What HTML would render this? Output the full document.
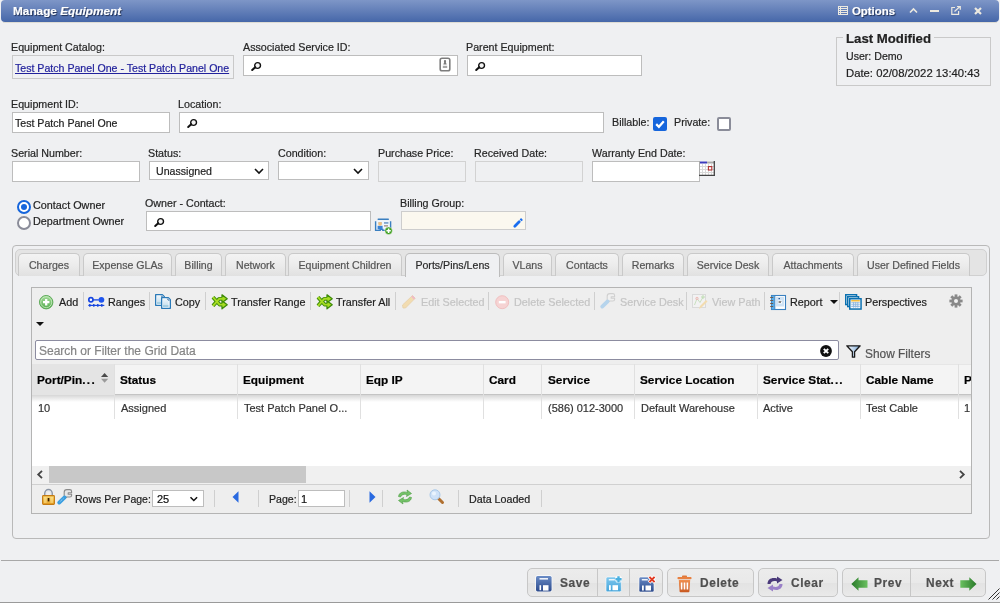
<!DOCTYPE html>
<html><head><meta charset="utf-8">
<style>
*{box-sizing:border-box}
html,body{margin:0;padding:0}
body{-webkit-text-stroke:0.2px currentColor;width:1000px;height:603px;overflow:hidden;background:#eff0f2;position:relative;font-family:"Liberation Sans",sans-serif;color:#2a2a2a}
.a{position:absolute}
.t{position:absolute;white-space:nowrap;font-size:11px;line-height:13px;will-change:transform}
.lbl{color:#262626;font-size:10.7px}
.box{position:absolute;background:#fff;border:1px solid #bdbdbd}
.dis{background:#eff0f2;border-color:#d2d2d2}
svg{position:absolute;overflow:visible}
.tab,.tb,.hd,.cell,.bt{will-change:transform}
#title{left:1px;top:0;width:998px;height:22px;border-radius:4px;background:linear-gradient(#7e96c7,#4667a9)}
.tt{color:#fff;font-weight:bold;font-size:11.8px;text-shadow:1px 1px 1px #1e2d50}
.tab{position:absolute;top:253px;height:23px;border:1px solid #c9c9c9;border-bottom:none;border-radius:5px 5px 0 0;background:linear-gradient(#f3f3f3 0%,#ececec 50%,#e1e1e1 100%);color:#555;font-size:10.6px;line-height:23px;text-align:center;white-space:nowrap}
.tab.on{background:#eff0f2;color:#2a2a2a;height:24px;border-color:#bcbcbc}
.sep{position:absolute;width:1px;background:#cfcfcf}
.tb{position:absolute;top:296px;font-size:10.8px;line-height:13px;white-space:nowrap;color:#1f1f1f}
.tbd{color:#c4c4c4}
.hd{position:absolute;top:374px;font-weight:bold;font-size:11.8px;line-height:13px;white-space:nowrap;color:#000}
.cell{position:absolute;top:402px;font-size:11px;line-height:13px;white-space:nowrap;color:#333}
.btn{position:absolute;top:568px;height:29px;border:1px solid #c7c7c7;border-radius:5px;background:linear-gradient(#ececec 0%,#e9e9e9 50%,#e3e3e3 52%,#e6e6e6 80%,#eaeaea 100%)}
.bt{position:absolute;top:576px;font-weight:bold;font-size:11.9px;line-height:14px;color:#4f4f4f;white-space:nowrap;letter-spacing:0.6px}
</style></head><body>

<!-- title bar -->
<div id="title" class="a"></div>
<div class="a" style="left:3px;top:22px;width:994px;height:1px;background:#dedcd4"></div>
<div class="t tt" style="left:13px;top:5px">Manage <i>Equipment</i></div>
<svg style="left:838px;top:6px" width="10" height="9" viewBox="0 0 10 9"><rect x="0.5" y="0.5" width="9" height="8" fill="none" stroke="#ece9e0" stroke-width="1"/><path d="M0.5 2.5H9.5M0.5 4.5H9.5M0.5 6.5H9.5M2.5 0.5V8.5" stroke="#ece9e0" stroke-width="1"/></svg>
<div class="t tt" style="left:852px;top:5px;font-size:11.4px">Options</div>
<svg style="left:909px;top:8px" width="9" height="5" viewBox="0 0 9 5"><path d="M1 4.5L4.5 1L8 4.5" fill="none" stroke="#ece9e0" stroke-width="1.6"/></svg>
<svg style="left:930px;top:10px" width="10" height="3"><rect x="0" y="0" width="9" height="2" fill="#ece9e0"/></svg>
<svg style="left:951px;top:6px" width="10" height="9" viewBox="0 0 10 9"><path d="M4 1.5H0.8V8.3H7.6V5" fill="none" stroke="#ece9e0" stroke-width="1.2"/><path d="M3.5 5.5L9 0.5M6 0.5H9.3V3.8" fill="none" stroke="#ece9e0" stroke-width="1.2"/></svg>
<svg style="left:974px;top:7px" width="8" height="8" viewBox="0 0 8 8"><path d="M1 1L7 7M7 1L1 7" stroke="#ece9e0" stroke-width="2.2"/></svg>

<!-- row 1 -->
<div class="t lbl" style="left:11px;top:41px">Equipment Catalog:</div>
<div class="box" style="left:12px;top:55px;width:222px;height:24px;background:#f0f1f3;border-color:#c9c9c9"></div>
<div class="t" style="left:15px;top:62px;font-size:10.6px;color:#22229c;text-decoration:underline">Test Patch Panel One - Test Patch Panel One</div>

<div class="t lbl" style="left:243px;top:41px">Associated Service ID:</div>
<div class="box" style="left:243px;top:55px;width:215px;height:21px"></div>
<div class="t lbl" style="left:466px;top:41px">Parent Equipment:</div>
<div class="box" style="left:467px;top:55px;width:175px;height:21px"></div>

<div class="a" style="left:836px;top:37px;width:155px;height:49px;border:1px solid #c9c9c9"></div>
<div class="t" style="left:843px;top:32px;padding:0 3px;background:#eff0f2;font-weight:bold;font-size:13.2px;line-height:14px;color:#222">Last Modified</div>
<div class="t" style="left:846px;top:50px;font-size:10.6px;color:#222">User: Demo</div>
<div class="t" style="left:846px;top:67px;font-size:11.3px;color:#222">Date: 02/08/2022 13:40:43</div>

<!-- row 2 -->
<div class="t lbl" style="left:11px;top:98px">Equipment ID:</div>
<div class="box" style="left:12px;top:112px;width:158px;height:21px"></div>
<div class="t" style="left:15px;top:117px;font-size:10.6px;color:#222">Test Patch Panel One</div>
<div class="t lbl" style="left:178px;top:98px">Location:</div>
<div class="box" style="left:179px;top:112px;width:425px;height:21px"></div>
<div class="t lbl" style="left:612px;top:116px">Billable:</div>
<div class="a" style="left:653px;top:117px;width:14px;height:14px;border-radius:2px;background:#1565dc"></div>
<svg style="left:653px;top:117px" width="14" height="14" viewBox="0 0 14 14"><path d="M3.2 7.1L5.9 9.8L10.8 4.2" fill="none" stroke="#fff" stroke-width="2.2"/></svg>
<div class="t lbl" style="left:674px;top:116px">Private:</div>
<div class="a" style="left:717px;top:117px;width:14px;height:14px;border-radius:2px;background:#fff;border:2px solid #8a8c99"></div>

<!-- row 3 -->
<div class="t lbl" style="left:11px;top:147px">Serial Number:</div>
<div class="box" style="left:12px;top:161px;width:128px;height:21px"></div>
<div class="t lbl" style="left:148px;top:147px">Status:</div>
<div class="box" style="left:149px;top:161px;width:120px;height:19px"></div>
<div class="t" style="left:156px;top:165px;font-size:10.6px;color:#222">Unassigned</div>
<div class="t lbl" style="left:278px;top:147px">Condition:</div>
<div class="box" style="left:278px;top:161px;width:91px;height:19px"></div>
<div class="t lbl" style="left:378px;top:147px">Purchase Price:</div>
<div class="box dis" style="left:378px;top:161px;width:88px;height:21px"></div>
<div class="t lbl" style="left:474px;top:147px">Received Date:</div>
<div class="box dis" style="left:475px;top:161px;width:108px;height:21px"></div>
<div class="t lbl" style="left:592px;top:147px">Warranty End Date:</div>
<div class="box" style="left:592px;top:161px;width:108px;height:21px"></div>

<!-- row 4 -->
<div class="a" style="left:17px;top:200px;width:14px;height:14px;border-radius:50%;border:2px solid #1565dc;background:#fff"></div>
<div class="a" style="left:21px;top:204px;width:6px;height:6px;border-radius:50%;background:#1565dc"></div>
<div class="a" style="left:17px;top:216px;width:14px;height:14px;border-radius:50%;border:2px solid #8a8c99;background:#fff"></div>
<div class="t" style="left:33px;top:199px;font-size:10.8px;color:#222">Contact Owner</div>
<div class="t" style="left:33px;top:215px;font-size:10.8px;color:#222">Department Owner</div>
<div class="t lbl" style="left:145px;top:197px">Owner - Contact:</div>
<div class="box" style="left:146px;top:211px;width:225px;height:20px"></div>
<div class="t lbl" style="left:400px;top:197px">Billing Group:</div>
<div class="box" style="left:401px;top:211px;width:125px;height:19px;background:#fbf8ef;border-color:#cdcdcd"></div>

<!-- tab panel -->
<div class="a" style="left:12px;top:245px;width:978px;height:294px;border:1px solid #b9b9b9;border-radius:4px;background:#eff0f2"></div>
<div class="a" style="left:15px;top:249px;width:972px;height:27px;border:1px solid #d0d0d0;border-radius:5px;background:#e4e4e4"></div>
<div class="tab" style="left:18px;width:62px">Charges</div>
<div class="tab" style="left:83px;width:89px">Expense GLAs</div>
<div class="tab" style="left:175px;width:47px">Billing</div>
<div class="tab" style="left:225px;width:61px">Network</div>
<div class="tab" style="left:288px;width:114px">Equipment Children</div>
<div class="tab on" style="left:405px;width:95px">Ports/Pins/Lens</div>
<div class="tab" style="left:503px;width:49px">VLans</div>
<div class="tab" style="left:555px;width:64px">Contacts</div>
<div class="tab" style="left:622px;width:62px">Remarks</div>
<div class="tab" style="left:687px;width:82px">Service Desk</div>
<div class="tab" style="left:772px;width:82px">Attachments</div>
<div class="tab" style="left:857px;width:113px">User Defined Fields</div>

<!-- grid container -->
<div class="a" style="left:31px;top:287px;width:941px;height:227px;border:1px solid #b4b4b4;background:#eeeeee"></div>

<!-- toolbar -->
<div class="tb" style="left:59px">Add</div>
<div class="sep" style="left:83px;top:292px;height:18px"></div>
<div class="tb" style="left:108px">Ranges</div>
<div class="sep" style="left:149px;top:292px;height:18px"></div>
<div class="tb" style="left:175px">Copy</div>
<div class="sep" style="left:205px;top:292px;height:18px"></div>
<div class="tb" style="left:231px">Transfer Range</div>
<div class="sep" style="left:310px;top:292px;height:18px"></div>
<div class="tb" style="left:336px">Transfer All</div>
<div class="sep" style="left:395px;top:292px;height:18px"></div>
<div class="tb tbd" style="left:421px">Edit Selected</div>
<div class="sep" style="left:488px;top:292px;height:18px"></div>
<div class="tb tbd" style="left:514px">Delete Selected</div>
<div class="sep" style="left:594px;top:292px;height:18px"></div>
<div class="tb tbd" style="left:620px">Service Desk</div>
<div class="sep" style="left:686px;top:292px;height:18px"></div>
<div class="tb tbd" style="left:712px">View Path</div>
<div class="sep" style="left:764px;top:292px;height:18px"></div>
<div class="tb" style="left:790px">Report</div>
<div class="sep" style="left:839px;top:292px;height:18px"></div>
<div class="tb" style="left:865px">Perspectives</div>
<svg style="left:36px;top:322px" width="8" height="4"><path d="M0 0H8L4 4Z" fill="#111"/></svg>
<svg style="left:830px;top:300px" width="8" height="4"><path d="M0 0H8L4 4Z" fill="#111"/></svg>

<!-- search -->
<div class="a" style="left:35px;top:340px;width:804px;height:20px;border:1px solid #8c8ca0;border-radius:2px;background:#fff"></div>
<div class="t" style="left:39px;top:344px;font-size:12px;line-height:14px;color:#858585">Search or Filter the Grid Data</div>
<div class="t" style="left:865px;top:347px;font-size:11.9px;line-height:14px;color:#555">Show Filters</div>

<!-- grid -->
<div class="a" style="left:32px;top:364px;width:939px;height:102px;background:#fff;overflow:hidden">
  <div class="a" style="left:0;top:0;width:939px;height:31px;background:#f4f4f4;border-top:1px solid #e6e6e6;border-bottom:1px solid #c4c4c4"></div>
  <div class="a" style="left:0;top:0;width:82px;height:31px;background:#e4e4e4"></div>
</div>
<div class="a" style="left:32px;top:395px;width:939px;height:7px;background:linear-gradient(rgba(0,0,0,.16),rgba(0,0,0,0))"></div>

<div class="hd" style="left:37px">Port/Pin<span style="letter-spacing:1.3px">...</span></div>
<div class="hd" style="left:120px">Status</div>
<div class="hd" style="left:243px">Equipment</div>
<div class="hd" style="left:366px">Eqp IP</div>
<div class="hd" style="left:489px">Card</div>
<div class="hd" style="left:548px">Service</div>
<div class="hd" style="left:640px">Service Location</div>
<div class="hd" style="left:763px">Service Stat<span style="letter-spacing:1.1px">...</span></div>
<div class="hd" style="left:866px">Cable Name</div>
<div class="hd" style="left:964px;width:7px;overflow:hidden">P</div>

<div class="cell" style="left:38px">10</div>
<div class="cell" style="left:121px">Assigned</div>
<div class="cell" style="left:244px">Test Patch Panel O...</div>
<div class="cell" style="left:548px">(586) 012-3000</div>
<div class="cell" style="left:641px">Default Warehouse</div>
<div class="cell" style="left:763px">Active</div>
<div class="cell" style="left:866px">Test Cable</div>
<div class="cell" style="left:964px;width:7px;overflow:hidden">1</div>

<!-- column separators -->
<div class="a" style="left:114px;top:364px;width:1px;height:55px;background:#e0e0e0"></div>
<div class="a" style="left:237px;top:364px;width:1px;height:55px;background:#e0e0e0"></div>
<div class="a" style="left:360px;top:364px;width:1px;height:55px;background:#e0e0e0"></div>
<div class="a" style="left:483px;top:364px;width:1px;height:55px;background:#e0e0e0"></div>
<div class="a" style="left:541px;top:364px;width:1px;height:55px;background:#e0e0e0"></div>
<div class="a" style="left:634px;top:364px;width:1px;height:55px;background:#e0e0e0"></div>
<div class="a" style="left:757px;top:364px;width:1px;height:55px;background:#e0e0e0"></div>
<div class="a" style="left:860px;top:364px;width:1px;height:55px;background:#e0e0e0"></div>
<div class="a" style="left:958px;top:364px;width:1px;height:55px;background:#e0e0e0"></div>

<!-- h scrollbar -->
<div class="a" style="left:32px;top:466px;width:939px;height:19px;background:#f0f0f0;border-bottom:1px solid #d0d0d0"></div>
<div class="a" style="left:49px;top:466px;width:257px;height:17px;background:#c8c8c8"></div>

<!-- pager -->
<div class="t" style="left:75px;top:493px;font-size:10.5px;color:#222">Rows Per Page:</div>
<div class="box" style="left:152px;top:490px;width:52px;height:17px"></div>
<div class="t" style="left:157px;top:493px;font-size:11px;color:#111">25</div>
<div class="sep" style="left:214px;top:490px;height:17px"></div>
<div class="sep" style="left:258px;top:490px;height:17px"></div>
<div class="t" style="left:269px;top:493px;font-size:10.6px;color:#222">Page:</div>
<div class="box" style="left:298px;top:490px;width:47px;height:17px"></div>
<div class="t" style="left:301px;top:493px;font-size:11px;color:#111">1</div>
<div class="sep" style="left:349px;top:490px;height:17px"></div>
<div class="sep" style="left:382px;top:490px;height:17px"></div>
<div class="sep" style="left:458px;top:490px;height:17px"></div>
<div class="t" style="left:469px;top:493px;font-size:10.7px;color:#222">Data Loaded</div>
<div class="sep" style="left:541px;top:490px;height:17px"></div>

<!-- footer -->
<div class="a" style="left:1px;top:560px;width:998px;height:1px;background:#a8a8a8"></div>
<div class="a" style="left:0;top:602px;width:1000px;height:1px;background:#9a9a9a"></div>

<div class="btn" style="left:527px;width:136px"></div>
<div class="a" style="left:597px;top:569px;width:1px;height:27px;background:#c7c7c7"></div>
<div class="a" style="left:629px;top:569px;width:1px;height:27px;background:#c7c7c7"></div>
<div class="bt" style="left:560px">Save</div>
<div class="btn" style="left:667px;width:87px"></div>
<div class="bt" style="left:700px">Delete</div>
<div class="btn" style="left:758px;width:80px"></div>
<div class="bt" style="left:791px">Clear</div>
<div class="btn" style="left:842px;width:144px"></div>
<div class="a" style="left:910px;top:569px;width:1px;height:27px;background:#c7c7c7"></div>
<div class="bt" style="left:874px">Prev</div>
<div class="bt" style="left:926px">Next</div>


<!-- ICONS -->
<!-- magnifiers in fields -->
<svg style="left:251px;top:62px" width="11" height="9" viewBox="0 0 11 9"><circle cx="6.6" cy="3.5" r="2.9" fill="#f4f4f4" stroke="#111" stroke-width="1.4"/><path d="M1.2 8L4.2 5.2" stroke="#111" stroke-width="2" stroke-linecap="round"/></svg>
<svg style="left:475px;top:62px" width="11" height="9" viewBox="0 0 11 9"><circle cx="6.6" cy="3.5" r="2.9" fill="#f4f4f4" stroke="#111" stroke-width="1.4"/><path d="M1.2 8L4.2 5.2" stroke="#111" stroke-width="2" stroke-linecap="round"/></svg>
<svg style="left:187px;top:119px" width="11" height="9" viewBox="0 0 11 9"><circle cx="6.6" cy="3.5" r="2.9" fill="#f4f4f4" stroke="#111" stroke-width="1.4"/><path d="M1.2 8L4.2 5.2" stroke="#111" stroke-width="2" stroke-linecap="round"/></svg>
<svg style="left:154px;top:218px" width="11" height="9" viewBox="0 0 11 9"><circle cx="6.6" cy="3.5" r="2.9" fill="#f4f4f4" stroke="#111" stroke-width="1.4"/><path d="M1.2 8L4.2 5.2" stroke="#111" stroke-width="2" stroke-linecap="round"/></svg>
<!-- id card -->
<svg style="left:439px;top:57px" width="12" height="15" viewBox="0 0 12 15"><rect x="1.2" y="1.2" width="9.6" height="12.6" rx="1.8" fill="#fff" stroke="#7d7d7d" stroke-width="1.6"/><path d="M6 3L7.7 7.6H4.3Z" fill="#7a7a7a"/><circle cx="6" cy="4.2" r="1.1" fill="#7a7a7a"/><rect x="3.8" y="8.8" width="4.4" height="2.2" fill="#a8a8a8"/></svg>
<!-- chevrons -->
<svg style="left:254px;top:168px" width="10" height="6" viewBox="0 0 10 6"><path d="M1 1L5 5L9 1" fill="none" stroke="#111" stroke-width="1.6"/></svg>
<svg style="left:353px;top:168px" width="10" height="6" viewBox="0 0 10 6"><path d="M1 1L5 5L9 1" fill="none" stroke="#111" stroke-width="1.6"/></svg>
<svg style="left:189px;top:496px" width="10" height="6" viewBox="0 0 10 6"><path d="M1.5 1.2L4.8 4.5L8.1 1.2" fill="none" stroke="#111" stroke-width="1.5"/></svg>
<!-- calendar -->
<svg style="left:699px;top:161px" width="16" height="15" viewBox="0 0 16 15"><rect x="0" y="0" width="16" height="15" fill="#fff"/><path d="M0.5 0V15" stroke="#aaa"/><rect x="1" y="0.5" width="7" height="2" fill="#3b3bbb"/><rect x="8" y="0.5" width="7" height="2" fill="#aaa"/><path d="M1 5.5H15M1 8.5H15M1 11.5H15M3.5 3V14M6.5 3V14M9.5 3V14M12.5 3V14" stroke="#d9d9d9" stroke-width="1"/><rect x="9.4" y="5.6" width="3.4" height="3.4" fill="#fff" stroke="#b03030" stroke-width="1.1"/><path d="M15.3 0V15M0 14.4H16" stroke="#444" stroke-width="1.3"/></svg>
<!-- contact card add -->
<svg style="left:374px;top:218px" width="19" height="17" viewBox="0 0 19 17"><rect x="2.5" y="2.6" width="13.5" height="9.4" fill="#eef6fd"/><rect x="3.5" y="0.6" width="11.5" height="1.4" rx="0.7" fill="#3a7fc0"/><path d="M1.6 3.2V12.4H6.2V11.4H8.8V12.4H13M16.6 3.2V10" fill="none" stroke="#3a7fc0" stroke-width="1.4"/><rect x="3.6" y="7.8" width="5" height="3.6" fill="#3a82d4"/><circle cx="6.1" cy="5.8" r="1.9" fill="#f0c080"/><path d="M4 5.4Q6.1 2.4 8.2 5.4L7.6 4.6Q6.1 3.6 4.6 4.6Z" fill="#8a4a10"/><rect x="10" y="4.4" width="4.4" height="1.1" fill="#3a70b0"/><rect x="10" y="7.4" width="4" height="1" fill="#8a6a5a"/><circle cx="14.6" cy="12.8" r="3.7" fill="#3c9e1e" stroke="#e8f0e0" stroke-width="0.5"/><path d="M12.4 12.8H16.8M14.6 10.6V15" stroke="#fff" stroke-width="1.6"/></svg>
<!-- pencil billing -->
<svg style="left:513px;top:217px" width="11" height="11" viewBox="0 0 11 11"><path d="M1.8 9.2L6.2 4.8" stroke="#1a6ef0" stroke-width="2.8" stroke-linecap="round"/><path d="M7.6 3.4L9 2" stroke="#1a6ef0" stroke-width="2.6" stroke-linecap="butt"/></svg>

<!-- toolbar icons -->
<svg style="left:39px;top:295px" width="15" height="15" viewBox="0 0 15 15"><defs><linearGradient id="ga" x1="0" y1="0" x2="0" y2="1"><stop offset="0" stop-color="#a6dc9c"/><stop offset="1" stop-color="#54ac4e"/></linearGradient></defs><circle cx="7.2" cy="7.2" r="6.7" fill="url(#ga)" stroke="#5aa855" stroke-width="1"/><circle cx="7.2" cy="7.2" r="5.5" fill="none" stroke="#d2f0cc" stroke-width="0.9" opacity="0.8"/><path d="M7.2 4V10.4M4 7.2H10.4" stroke="#fff" stroke-width="2.3"/></svg>
<svg style="left:88px;top:296px" width="17" height="12" viewBox="0 0 17 12"><circle cx="2.9" cy="3.8" r="2.1" fill="#fff" stroke="#1746e0" stroke-width="1.7"/><path d="M5 3.9H10.8" stroke="#1746e0" stroke-width="1.3"/><circle cx="13.4" cy="3.8" r="2.9" fill="#1e55ee"/><path d="M0.3 9.4H16.3" stroke="#1746e0" stroke-width="1.2"/><path d="M1.8 8V10.8M5.8 8V10.8M9.8 8V10.8M13.8 8V10.8" stroke="#1746e0" stroke-width="1.4"/></svg>
<svg style="left:155px;top:294px" width="17" height="16" viewBox="0 0 17 16"><defs><linearGradient id="gc" x1="0" y1="0" x2="0" y2="1"><stop offset="0" stop-color="#eef6fb"/><stop offset="0.7" stop-color="#cfe4f0"/><stop offset="0.75" stop-color="#a6cfe2"/><stop offset="1" stop-color="#a6cfe2"/></linearGradient></defs><path d="M0.65 0.65H7.4L9.35 2.6V11.35H0.65Z" fill="#fff" stroke="#2a7ab8" stroke-width="1.3" stroke-linejoin="round"/><rect x="2" y="2" width="5.6" height="8" fill="url(#gc)"/><path d="M6.3 1.6Q6.6 3.1 8.3 3.4" fill="none" stroke="#2a6aa0" stroke-width="1"/><path d="M6.65 3.65H13.4L15.35 5.6V14.35H6.65Z" fill="#fff" stroke="#2a7ab8" stroke-width="1.3" stroke-linejoin="round"/><rect x="8" y="5" width="5.6" height="8" fill="url(#gc)"/><path d="M12.3 4.6Q12.6 6.1 14.3 6.4" fill="none" stroke="#2a6aa0" stroke-width="1"/></svg>
<svg style="left:211px;top:294px" width="17" height="16" viewBox="0 0 17 16"><g fill="none" stroke-linejoin="round"><path d="M2 3.2L8.6 10.6H11.5M2 11.8L8.2 4.8H11.5" stroke="#3c8a08" stroke-width="3.8" stroke-linecap="butt"/></g><path d="M11 0.8L16.2 4.8L11 8.8ZM11 6.8L16.2 10.8L11 14.8Z" fill="#9ed620" stroke="#3c8a08" stroke-width="1.3" stroke-linejoin="round"/><path d="M2 3.2L8.6 10.6H12M2 11.8L8.2 4.8H12" fill="none" stroke="#a6dc22" stroke-width="1.9" stroke-linecap="butt" stroke-linejoin="round"/><path d="M11.6 2.6L14.6 4.8L11.6 7ZM11.6 8.6L14.6 10.8L11.6 13Z" fill="#a6dc22"/></svg>
<svg style="left:316px;top:294px" width="17" height="16" viewBox="0 0 17 16"><g fill="none" stroke-linejoin="round"><path d="M2 3.2L8.6 10.6H11.5M2 11.8L8.2 4.8H11.5" stroke="#3c8a08" stroke-width="3.8" stroke-linecap="butt"/></g><path d="M11 0.8L16.2 4.8L11 8.8ZM11 6.8L16.2 10.8L11 14.8Z" fill="#9ed620" stroke="#3c8a08" stroke-width="1.3" stroke-linejoin="round"/><path d="M2 3.2L8.6 10.6H12M2 11.8L8.2 4.8H12" fill="none" stroke="#a6dc22" stroke-width="1.9" stroke-linecap="butt" stroke-linejoin="round"/><path d="M11.6 2.6L14.6 4.8L11.6 7ZM11.6 8.6L14.6 10.8L11.6 13Z" fill="#a6dc22"/></svg>
<svg style="left:401px;top:294px" width="16" height="16" viewBox="0 0 16 16"><path d="M2 14L1.5 11L11.5 1.5L14.2 4.2L4.5 14Z" fill="#f2dcb0" stroke="#e6cfa8" stroke-width="0.8"/><path d="M11.5 1.5L14.2 4.2L13 5.4L10.3 2.7Z" fill="#f0b8c8"/></svg>
<svg style="left:495px;top:295px" width="15" height="15" viewBox="0 0 15 15"><circle cx="7.2" cy="7.2" r="6.5" fill="#f6d3d3" stroke="#f0c0c0" stroke-width="1"/><path d="M3.8 7.2H10.6" stroke="#fff" stroke-width="2.4"/></svg>
<svg style="left:600px;top:293px" width="16" height="16" viewBox="0 0 16 16"><path d="M7.2 7.8V3.2Q7.2 0.6 9.8 0.6H12.8Q14.6 0.6 14.6 2.5V3.8H11.2V5.3H14.6V6.4Q14.6 8 12.8 8H9.8L8.2 9.4Z" fill="#f0f0f0" stroke="#d0d0d0" stroke-width="1.1" stroke-linejoin="round"/><path d="M2.2 13.6L7.6 8.4" stroke="#b6d4ec" stroke-width="3.8" stroke-linecap="round"/></svg>
<svg style="left:692px;top:294px" width="16" height="16" viewBox="0 0 16 16"><rect x="0.5" y="0.5" width="13" height="13" fill="#f2f2f2" stroke="#dadada"/><path d="M2.5 11L5 4.5L8 8.5L11 3" fill="none" stroke="#c9e0c0" stroke-width="1"/><circle cx="5" cy="4.5" r="1.2" fill="none" stroke="#f0b8b8"/><circle cx="11" cy="3" r="1.2" fill="none" stroke="#bcdcb0"/><path d="M7 15L8 12L14 6L15.5 7.5L9.5 13.5Z" fill="#f2dcb0"/></svg>
<svg style="left:770px;top:294px" width="17" height="16" viewBox="0 0 17 16"><rect x="1.5" y="1.5" width="14" height="14" fill="#fff" stroke="#3a80c0" stroke-width="1.1"/><rect x="1.8" y="1.8" width="2.8" height="13.4" fill="#5aaee8"/><path d="M4.8 1.5V15.5" stroke="#3a80c0" stroke-width="1"/><rect x="6" y="3" width="8" height="9.5" fill="#cfe3f5"/><rect x="8" y="6.5" width="4" height="3" fill="#fff"/><path d="M8.6 7.5H11.4M8.6 8.5H11" stroke="#555" stroke-width="0.7"/><rect x="8.5" y="4" width="1.5" height="1.2" fill="#2a5a9a"/><path d="M0.2 3.5H3.2M0.2 6.5H3.2M0.2 9.5H3.2M0.2 12.5H3.2" stroke="#6a5a50" stroke-width="1.1"/></svg>
<svg style="left:845px;top:294px" width="17" height="16" viewBox="0 0 17 16"><rect x="0.75" y="0.75" width="10.8" height="9.8" fill="#fff" stroke="#0a70b0" stroke-width="1.5"/><rect x="2.75" y="2.75" width="10.8" height="9.8" fill="#fff" stroke="#0a70b0" stroke-width="1.5"/><rect x="4.75" y="4.75" width="11.3" height="10.3" fill="#fff" stroke="#0a70b0" stroke-width="1.5"/><path d="M6.2 6.8H14.8" stroke="#f0b020" stroke-width="1.3"/><path d="M6.2 8.8H14.8M6.2 10.8H14.8M6.2 12.6H14.8M8.6 8V13.6M10.7 8V13.6M12.8 8V13.6" stroke="#90b8e0" stroke-width="1"/></svg>
<svg style="left:949px;top:294px" width="14" height="14" viewBox="0 0 14 14"><g transform="translate(7,7)" fill="#898989"><circle r="4.6"/><rect x="-1.4" y="-6.6" width="2.8" height="13.2"/><rect x="-1.4" y="-6.6" width="2.8" height="13.2" transform="rotate(45)"/><rect x="-1.4" y="-6.6" width="2.8" height="13.2" transform="rotate(90)"/><rect x="-1.4" y="-6.6" width="2.8" height="13.2" transform="rotate(135)"/><circle r="2" fill="#f0f0f0"/></g></svg>

<!-- search clear + filter -->
<svg style="left:820px;top:345px" width="13" height="13" viewBox="0 0 13 13"><circle cx="6" cy="6" r="5.9" fill="#111"/><path d="M3.8 3.8L8.2 8.2M8.2 3.8L3.8 8.2" stroke="#fff" stroke-width="1.9"/></svg>
<svg style="left:846px;top:345px" width="16" height="13" viewBox="0 0 16 13"><defs><linearGradient id="gf" x1="0" x2="1"><stop offset="0" stop-color="#fff"/><stop offset="1" stop-color="#7aa8d8"/></linearGradient></defs><path d="M0.8 0.8H14.2L8.6 6.8V12.2H6.4V6.8Z" fill="url(#gf)" stroke="#1a1a1a" stroke-width="1.3" stroke-linejoin="round"/></svg>

<!-- sort arrows -->
<svg style="left:101px;top:372px" width="8" height="12" viewBox="0 0 8 12"><path d="M0 5L3.6 1L7.2 5Z" fill="#4a4a4a"/><path d="M0 6.8H7.2L3.6 10.8Z" fill="#9a9a9a"/></svg>

<!-- scrollbar arrows -->
<svg style="left:36px;top:470px" width="8" height="9" viewBox="0 0 8 9"><path d="M6 0.8L2.2 4.5L6 8.2" fill="none" stroke="#444" stroke-width="1.8"/></svg>
<svg style="left:958px;top:470px" width="8" height="9" viewBox="0 0 8 9"><path d="M2 0.8L5.8 4.5L2 8.2" fill="none" stroke="#444" stroke-width="1.8"/></svg>

<!-- pager icons -->
<svg style="left:42px;top:489px" width="13" height="16" viewBox="0 0 13 16"><defs><linearGradient id="gl" x1="0" y1="0" x2="0" y2="1"><stop offset="0" stop-color="#fbd870"/><stop offset="1" stop-color="#e8a428"/></linearGradient></defs><path d="M2.8 7V4.3A3.7 3.7 0 0 1 10.2 4.3V7" fill="none" stroke="#8a94a4" stroke-width="1.5"/><path d="M4 7V4.4A2.5 2.5 0 0 1 9 4.4V7" fill="none" stroke="#d8dde6" stroke-width="0.6"/><rect x="0.6" y="6.6" width="11.8" height="8.8" rx="0.8" fill="url(#gl)" stroke="#c47a12" stroke-width="1.1"/><path d="M2 9H4.6M2 11H4.6M2 13H4.6M8.4 9H11M8.4 11H11M8.4 13H11" stroke="#fff0b0" stroke-width="0.8"/><rect x="5.7" y="9" width="1.7" height="3.4" fill="#3a2000"/></svg>
<svg style="left:57px;top:489px" width="16" height="16" viewBox="0 0 16 16"><path d="M7.2 7.8V3.2Q7.2 0.6 9.8 0.6H12.8Q14.6 0.6 14.6 2.5V3.8H11.2V5.3H14.6V6.4Q14.6 8 12.8 8H9.8L8.2 9.4Z" fill="#e6e6e6" stroke="#8a8a8a" stroke-width="1.1" stroke-linejoin="round"/><path d="M2.2 13.6L7.6 8.4" stroke="#3a9ee0" stroke-width="3.8" stroke-linecap="round"/><path d="M2.8 12.8L7 8.8" stroke="#d6eefc" stroke-width="0.8" stroke-dasharray="1 1"/></svg>
<svg style="left:232px;top:491px" width="7" height="12" viewBox="0 0 7 12"><path d="M6.5 0.3V11.7L0.5 6Z" fill="#2a6ae0"/></svg>
<svg style="left:369px;top:491px" width="7" height="12" viewBox="0 0 7 12"><path d="M0.5 0.3V11.7L6.5 6Z" fill="#2a6ae0"/></svg>
<svg style="left:396px;top:489px" width="18" height="16" viewBox="0 0 18 16"><path d="M2.5 7.5C3 3.5 7 2 11.5 3.5L11 1L15.5 4.5L10.5 7.5L11 5.5C8 4.8 5.5 5.5 4.5 8Z" fill="#74c268" stroke="#4a9a40" stroke-width="0.6"/><path d="M15.5 8.5C15 12.5 11 14 6.5 12.5L7 15L2.5 11.5L7.5 8.5L7 10.5C10 11.2 12.5 10.5 13.5 8Z" fill="#74c268" stroke="#4a9a40" stroke-width="0.6"/></svg>
<svg style="left:429px;top:489px" width="16" height="16" viewBox="0 0 16 16"><path d="M9 9L13.5 13.5" stroke="#b07030" stroke-width="3" stroke-linecap="round"/><circle cx="6" cy="5.8" r="5" fill="#cfe2f8" stroke="#a8c8e8" stroke-width="1"/><circle cx="5" cy="4.5" r="2" fill="#eaf4fd"/></svg>

<!-- footer icons -->
<svg style="left:535px;top:575px" width="18" height="17" viewBox="0 0 18 17"><defs><linearGradient id="gs" x1="0" y1="0" x2="0" y2="1"><stop offset="0" stop-color="#6a8cc6"/><stop offset="1" stop-color="#2c4a8c"/></linearGradient></defs><rect x="0.3" y="0.3" width="17" height="16.7" rx="2.2" fill="#fff" opacity="0.85"/><rect x="1" y="1" width="15.6" height="15.4" rx="1.6" fill="url(#gs)"/><rect x="4.5" y="3" width="8.5" height="1.6" fill="#eef2fa"/><rect x="4.5" y="10.2" width="1.6" height="5" fill="#fff"/><rect x="8" y="10.2" width="5.5" height="5.4" fill="#fff"/></svg>
<svg style="left:605px;top:575px" width="19" height="18" viewBox="0 0 19 18"><defs><linearGradient id="gn" x1="0" y1="0" x2="0" y2="1"><stop offset="0" stop-color="#80c8ee"/><stop offset="1" stop-color="#44a4da"/></linearGradient></defs><rect x="1" y="2" width="15.3" height="14.8" rx="1.6" fill="url(#gn)" stroke="#fff" stroke-width="0.6"/><rect x="3.8" y="4" width="6" height="1.5" fill="#eaf6fd"/><rect x="4" y="10.2" width="1.8" height="5" fill="#fff"/><rect x="7.5" y="10.2" width="5.5" height="5" fill="#fff"/><path d="M13.5 0.8V7.8M10 4.3H17" stroke="#fff" stroke-width="4"/><path d="M13.5 1.2V7.4M10.4 4.3H16.6" stroke="#4ab0e0" stroke-width="2.4"/></svg>
<svg style="left:638px;top:575px" width="19" height="18" viewBox="0 0 19 18"><rect x="1" y="2" width="15" height="15" rx="1.6" fill="url(#gs)" stroke="#fff" stroke-width="0.6"/><rect x="3.8" y="4" width="6" height="1.5" fill="#eef2fa"/><rect x="4" y="10.5" width="1.8" height="5" fill="#fff"/><rect x="7.5" y="10.5" width="5.5" height="5" fill="#fff"/><path d="M11 1.5L17 7.5M17 1.5L11 7.5" stroke="#fff" stroke-width="3.6"/><path d="M11.4 1.9L16.6 7.1M16.6 1.9L11.4 7.1" stroke="#e03a22" stroke-width="2"/></svg>
<svg style="left:677px;top:575px" width="15" height="18" viewBox="0 0 15 18"><defs><linearGradient id="gt" x1="0" y1="0" x2="0" y2="1"><stop offset="0" stop-color="#f09050"/><stop offset="1" stop-color="#c85820"/></linearGradient></defs><rect x="5" y="0.5" width="5" height="2" rx="0.8" fill="#e0783a"/><rect x="0.5" y="2" width="14" height="2.2" rx="0.8" fill="#e88040"/><path d="M1.8 5H13.2L12.4 16.5Q12.3 17.3 11.5 17.3H3.5Q2.7 17.3 2.6 16.5Z" fill="url(#gt)"/><path d="M4.6 7.5V14.5M7.5 7.5V14.5M10.4 7.5V14.5" stroke="#fff" stroke-width="1.6"/></svg>
<svg style="left:766px;top:576px" width="18" height="16" viewBox="0 0 18 16"><path d="M1.5 8C1.5 3 6 1 11 2.5L11 0.5L16.5 4L11 7.5V5.5C7.5 4.5 5 5.5 4.5 8Z" fill="#4a3a7a"/><path d="M16.5 8C16.5 13 12 15 7 13.5L7 15.5L1.5 12L7 8.5V10.5C10.5 11.5 13 10.5 13.5 8Z" fill="#9a80c8"/></svg>
<svg style="left:851px;top:577px" width="17" height="15" viewBox="0 0 17 15"><defs><linearGradient id="gp" x1="0" x2="1"><stop offset="0" stop-color="#2a7a2a"/><stop offset="1" stop-color="#6ac060"/></linearGradient><linearGradient id="gx" x1="0" x2="1"><stop offset="0" stop-color="#6ac060"/><stop offset="1" stop-color="#2a7a2a"/></linearGradient></defs><path d="M0.3 7L7.5 0.2V3.3H16.5V10.7H7.5V13.8Z" fill="url(#gp)"/></svg>
<svg style="left:960px;top:577px" width="17" height="15" viewBox="0 0 17 15"><path d="M16.5 7L9.3 0.2V3.3H0.3V10.7H9.3V13.8Z" fill="url(#gx)"/></svg>
<svg style="left:988px;top:588px" width="12" height="12" viewBox="0 0 12 12"><path d="M0.5 11.5L11.5 0.5M4.5 11.5L11.5 4.5M8.5 11.5L11.5 8.5" stroke="#333" stroke-width="1"/></svg>

</body></html>
